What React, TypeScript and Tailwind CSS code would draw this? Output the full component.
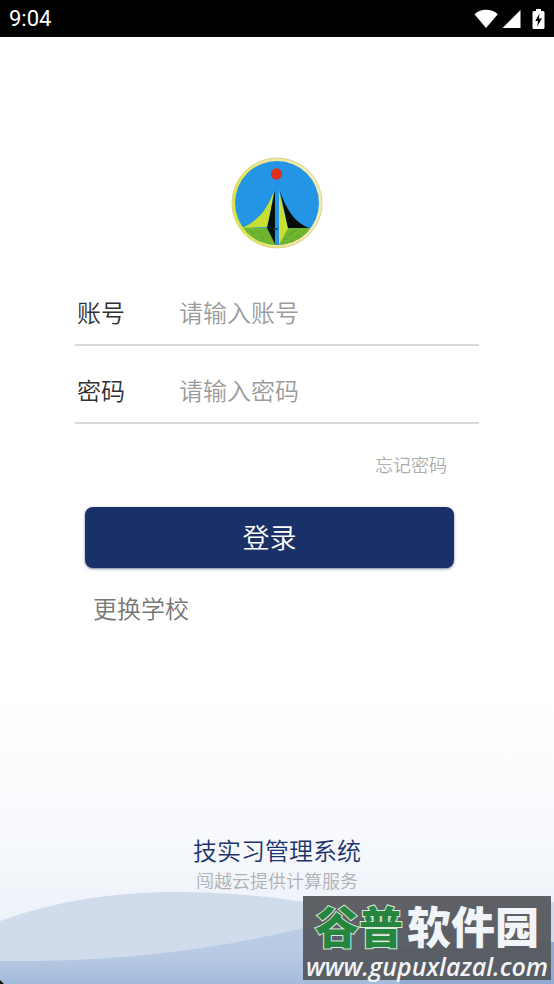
import { useId } from "react";

function StatusBar() {
  return (
    <header className="flex h-[37px] shrink-0 items-center justify-between bg-black pr-2 pl-[9px] text-white">
      <span className="font-['Roboto',sans-serif] text-[22px] leading-6 font-normal">9:04</span>
      <div className="flex items-center gap-[3px]">
        <svg width="26" height="20" viewBox="0 0 26 20" fill="currentColor" aria-label="Wi-Fi">
          <path d="M1.500 5.200C4.800 2.200 8.800.8 13 .8S21.500 2.200 24.800 5.200L13 19Z" />
        </svg>
        <svg width="19" height="20" viewBox="0 0 19 20" fill="currentColor" aria-label="Signal">
          <path d="M18.500 1v18H.5Z" />
        </svg>
        <svg width="22" height="22" viewBox="0 0 22 22" aria-label="Battery charging">
          <path d="M12 1h5v2h2q1.500 0 1.500 1.500v15Q20.500 21 19 21h-9Q8.500 21 8.500 19.500v-15Q8.500 3 10 3h2Z" fill="#fff" />
          <path d="M15.500 5.500 11.300 13h2.700l-.8 5.500 4.700-8h-3Z" fill="#000" />
        </svg>
      </div>
    </header>
  );
}

function SchoolLogo() {
  const id = useId();
  return (
    <svg width="92" height="92" viewBox="0 0 92 92" role="img" aria-label="校徽">
      <defs>
        <linearGradient id={id + "r"} x1="0" y1="0.600" x2="1" y2="0.400">
          <stop offset="0" stopColor="#dce833" />
          <stop offset="0.500" stopColor="#f1e69a" />
          <stop offset="1" stopColor="#f2efb5" />
        </linearGradient>
        <clipPath id={id + "c"}>
          <circle cx="46" cy="46" r="42" />
        </clipPath>
      </defs>
      <circle cx="46" cy="46" r="45" fill={"url(#" + id + "r)"} stroke="#ddd08c" strokeWidth="1" />
      <g clipPath={"url(#" + id + "c)"}>
        <path d="M0 0h92v92H0Z" fill="#2495e4" />
        <path d="M0 71h92v21H0Z" fill="#70b52f" />
        <path d="m12 75 3 2m5-3 3 3m4-3 2 2m-9 5 4 2m6-3 3 2m24-4 4-2m-8 7 4-2m4-5 5-3m-1 7 3-2m-8 7 3-2" stroke="#539f2c" strokeWidth="1" />
        <path d="M43 34C37 50 29 63 11 71l26-1Z" fill="#c7df32" />
        <path d="M44 33 36 71l8 16Z" fill="#05120c" />
        <path d="M44 33h4v56h-4Z" fill="#2495e4" />
        <path d="m48 34 9 37-9 17Z" fill="#c7df32" />
        <path d="M49 34C55 52 63 65 78 71H57Z" fill="#080d0a" />
        <path d="M42 72h5" stroke="#173d37" strokeWidth="1.500" />
        <circle cx="45.500" cy="17" r="5.700" fill="#db301d" />
      </g>
    </svg>
  );
}

function Field({ id, label, type, hint }: { id: string; label: string; type: string; hint: string }) {
  return (
    <div className="flex h-[78px] items-center border-b-2 border-[#d8d8d8] pt-3 pl-0.5 text-2xl">
      <label htmlFor={id} className="w-[102px] shrink-0 text-[#303030]">{label}</label>
      <input
        id={id}
        type={type}
        placeholder={hint}
        className="min-w-0 flex-1 bg-transparent outline-none placeholder:text-[#9b9b9b]"
      />
    </div>
  );
}

function Waves() {
  const id = useId();
  return (
    <svg className="absolute bottom-0 left-0 h-24 w-full" viewBox="0 0 554 96" preserveAspectRatio="none" aria-hidden="true">
      <defs>
        <linearGradient id={id} x1="0" y1="0" x2="0" y2="1">
          <stop offset="0" stopColor="#bdcfe7" />
          <stop offset="0.600" stopColor="#b7c9e3" />
          <stop offset="1" stopColor="#a4bbdb" />
        </linearGradient>
      </defs>
      <path d="M0 33C55 13 115 4 175 4C240 4 300 12 350 22C420 22 490 14 554 14V96H0Z" fill="#d0dceb" />
      <path d="M0 73C120 74 210 62 304 40C350 30 400 24 450 32C490 40 520 52 554 54V96H0Z" fill={"url(#" + id + ")"} />
      <path d="M400 60C450 55 510 52 554 54V96H400Z" fill="#92abd4" />
      <path d="M0 92 4 96H0Z" fill="#111" />
    </svg>
  );
}

function Watermark() {
  return (
    <div className="absolute right-[3px] bottom-1 flex h-[84px] w-[248px] flex-col items-center justify-between bg-[#56595e]/95 pt-1.5 text-[#f1f4f8]">
      <div className="flex gap-1 text-[44px] leading-[46px] font-black [font-style:oblique_6deg]">
        <span className="text-[#26863d] [paint-order:stroke_fill] [-webkit-text-stroke:2px_#dce9df]">谷普</span>
        <span>软件园</span>
      </div>
      <span className="font-['Open_Sans',sans-serif] text-[25px] leading-7 font-semibold italic">www.gupuxlazal.com</span>
    </div>
  );
}

export default function App() {
  return (
    <div className="relative flex min-h-screen flex-col bg-white font-['Noto_Sans_CJK_SC',sans-serif] font-[350]">
      <StatusBar />
      <main className="flex flex-1 flex-col">
        <div className="flex justify-center pt-[120px]">
          <SchoolLogo />
        </div>
        <form className="mx-[75px] mt-[19px] flex flex-col" onSubmit={(e) => e.preventDefault()}>
          <Field id="account" label="账号" type="text" hint="请输入账号" />
          <Field id="password" label="密码" type="password" hint="请输入密码" />
          <a href="#forgot" className="mt-[26px] mr-8 self-end text-lg leading-7 text-[#adadad]">忘记密码</a>
          <button type="submit" className="mt-[29px] mr-[25px] ml-2.5 h-[61px] rounded-lg bg-[#1a3068] text-[27px] text-white shadow-sm shadow-[#1a3068]/50">
            登录
          </button>
          <button type="button" className="mt-6 ml-[18px] self-start text-2xl text-[#777777]">更换学校</button>
        </form>
        <footer className="relative mt-auto flex h-[294px] flex-col items-center bg-linear-to-b from-white via-[#f7f9fc] to-[#e5edf7] pt-[142px]">
          <Waves />
          <p className="relative text-2xl leading-9 text-[#1b336d]">技实习管理系统</p>
          <p className="relative text-lg leading-6 text-[#b0b1b4]">闯越云提供计算服务</p>
        </footer>
      </main>
      <Watermark />
    </div>
  );
}
